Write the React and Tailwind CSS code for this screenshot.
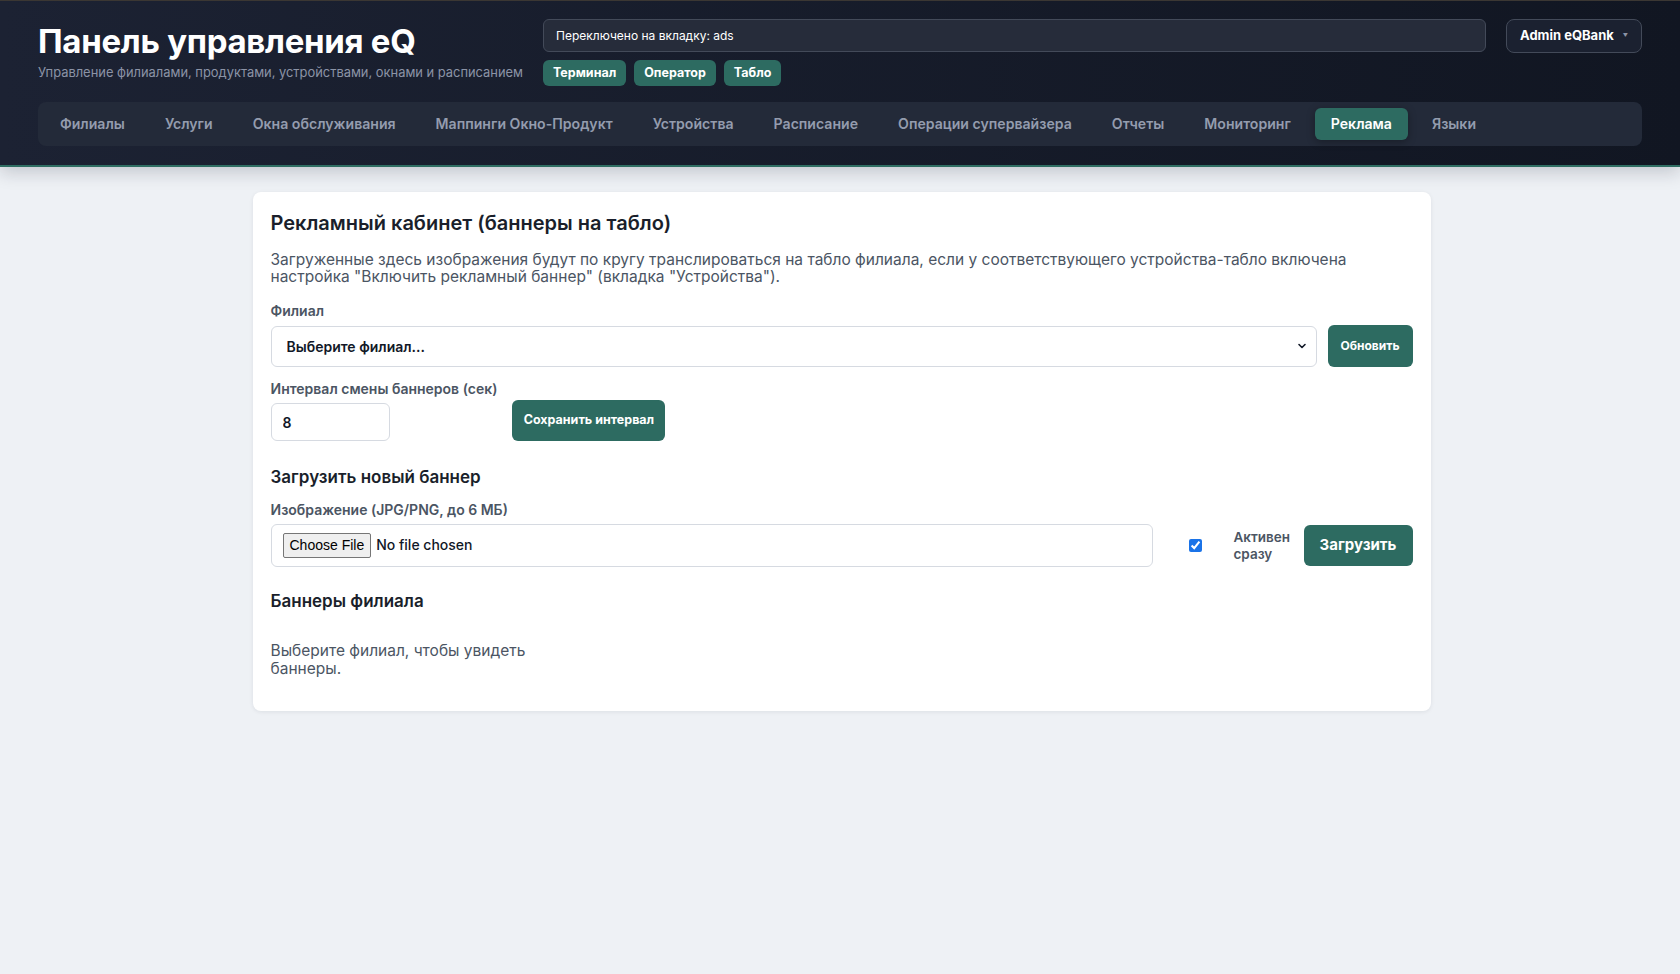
import React, { useState } from 'react';

const tabs = [
  'Филиалы',
  'Услуги',
  'Окна обслуживания',
  'Маппинги Окно-Продукт',
  'Устройства',
  'Расписание',
  'Операции супервайзера',
  'Отчеты',
  'Мониторинг',
  'Реклама',
  'Языки',
];

export default function App() {
  const [activeTab, setActiveTab] = useState('Реклама');
  const [interval, setInterval] = useState('8');
  const [activeNow, setActiveNow] = useState(true);

  return (
    <div className="min-h-screen bg-[#eef1f5] font-['Inter',sans-serif]">
      {/* Top header */}
      <header className="border-t border-[#3b3733] border-b-2 border-b-[#2f6e63] bg-gradient-to-r from-[#1c2233] to-[#111622] px-[38px] pt-[18px] pb-[19px] shadow-[0_6px_16px_rgba(15,23,42,0.18)]">
        <div className="flex items-start gap-5">
          <div className="w-[485px] shrink-0 whitespace-nowrap">
            <h1 className="mt-[3px] text-[33px] leading-[38px] font-bold tracking-[-0.3px] text-white">Панель управления eQ</h1>
            <p className="mt-[4px] text-[12.9px] leading-[18px] text-[#8b93a6]">
              Управление филиалами, продуктами, устройствами, окнами и расписанием
            </p>
          </div>

          <div className="flex-1">
            <div className="flex h-[33px] items-center rounded-md border border-[#434a59] bg-[#262c3a] px-3 text-[12px] text-white">
              Переключено на вкладку: ads
            </div>
            <div className="mt-[8px] flex gap-2">
              <button className="h-[26px] rounded-md bg-[#2d6b61] px-[10px] text-[12.5px] font-bold text-white">Терминал</button>
              <button className="h-[26px] rounded-md bg-[#2d6b61] px-[10px] text-[12.5px] font-bold text-white">Оператор</button>
              <button className="h-[26px] rounded-md bg-[#2d6b61] px-[10px] text-[12.5px] font-bold text-white">Табло</button>
            </div>
          </div>

          <button className="flex h-[34px] w-[136px] shrink-0 items-center justify-center gap-[9px] rounded-lg border border-[#434a59] bg-[#1b2130] text-[13px] font-bold text-white">
            Admin eQBank
            <span className="text-[5px] text-[#8b93a6]">▼</span>
          </button>
        </div>

        {/* Section tabs */}
        <nav className="mt-[16px] flex gap-2 rounded-lg bg-[#232a39] p-1.5">
          {tabs.map((tab) => (
            <button
              key={tab}
              onClick={() => setActiveTab(tab)}
              className={
                tab === activeTab
                  ? 'h-[32px] rounded-md bg-[#2d6b61] px-4 text-[14.1px] font-semibold text-white shadow-[0_2px_8px_rgba(0,0,0,0.3)]'
                  : 'h-[32px] rounded-md px-4 text-[14.1px] font-semibold text-[#949cae]'
              }
            >
              {tab}
            </button>
          ))}
        </nav>
      </header>

      {/* Ads cabinet */}
      <main className="flex justify-center pt-[25px] pl-[3px]">
        <section className="w-[1178px] rounded-lg bg-white px-[18px] pt-[18px] pb-[33px] shadow-[0_1px_4px_rgba(15,23,42,0.08)]">
          <h2 className="text-[20px] leading-[26px] font-semibold text-[#1a1f2b]">Рекламный кабинет (баннеры на табло)</h2>
          <p className="mt-[15px] text-[15.5px] leading-[17px] text-[#4b5563]">
            Загруженные здесь изображения будут по кругу транслироваться на табло филиала, если у соответствующего устройства-табло включена настройка "Включить рекламный баннер" (вкладка "Устройства").
          </p>

          <label className="mt-[17px] block text-[14px] leading-[18px] font-semibold text-[#4b5563]">Филиал</label>
          <div className="mt-[5px] flex items-center gap-[11px]">
            <div className="relative flex-1">
              <select className="h-[41px] w-full appearance-none rounded-md border border-[#d6dae1] bg-white pl-[15px] text-[14px] font-semibold text-[#111827]">
                <option>Выберите филиал...</option>
              </select>
              <svg className="pointer-events-none absolute top-1/2 right-[10px] -translate-y-1/2" width="10" height="10" viewBox="0 0 10 10">
                <path d="M2 3.5 L5 6.5 L8 3.5" fill="none" stroke="#111827" strokeWidth="1.6" strokeLinecap="round" strokeLinejoin="round" />
              </svg>
            </div>
            <button className="h-[42px] w-[85px] rounded-md bg-[#2d6b61] text-[12px] font-bold text-white">Обновить</button>
          </div>

          <div className="mt-[13px] flex items-end gap-[15px]">
            <div>
              <label className="block text-[14px] leading-[18px] font-semibold text-[#4b5563]">Интервал смены баннеров (сек)</label>
              <input
                value={interval}
                onChange={(e) => setInterval(e.target.value)}
                className="mt-[5px] h-[38px] w-[119px] rounded-md border border-[#d6dae1] px-[11px] text-[14px] font-semibold text-[#111827]"
              />
            </div>
            <button className="h-[41px] w-[153px] rounded-md bg-[#2d6b61] text-[12.5px] font-bold text-white">Сохранить интервал</button>
          </div>

          <h3 className="mt-[25px] text-[17px] leading-[22px] font-semibold text-[#1a1f2b]">Загрузить новый баннер</h3>
          <label className="mt-[13px] block text-[14px] leading-[18px] font-semibold text-[#4b5563]">Изображение (JPG/PNG, до 6 МБ)</label>
          <div className="mt-[5px] flex items-center">
            <div className="flex h-[43px] flex-1 items-center rounded-md border border-[#d6dae1] px-[11px]">
              <input type="file" className="text-[14px] font-medium text-[#111827] file:mr-[5px] file:rounded-[2px] file:border file:border-[#767676] file:bg-[#efefef] file:px-[6px] file:py-[1px] file:font-['Liberation_Sans',sans-serif] file:text-[14px] file:font-normal file:text-black" />
            </div>
            <label className="ml-[36px] flex w-[105px] items-center">
              <input type="checkbox" checked={activeNow} onChange={(e) => setActiveNow(e.target.checked)} className="h-[13px] w-[13px] accent-[#1a73e8]" />
              <span className="ml-[32px] text-[13.5px] leading-[17px] font-semibold text-[#4b5563]">Активен сразу</span>
            </label>
            <button className="ml-[10px] h-[41px] w-[109px] rounded-md bg-[#2d6b61] text-[15px] font-bold text-white">Загрузить</button>
          </div>

          <h3 className="mt-[23px] text-[17px] leading-[22px] font-semibold text-[#1a1f2b]">Баннеры филиала</h3>
          <p className="mt-[30px] w-[262px] text-[15.5px] leading-[18px] text-[#4b5563]">Выберите филиал, чтобы увидеть баннеры.</p>
        </section>
      </main>
    </div>
  );
}
